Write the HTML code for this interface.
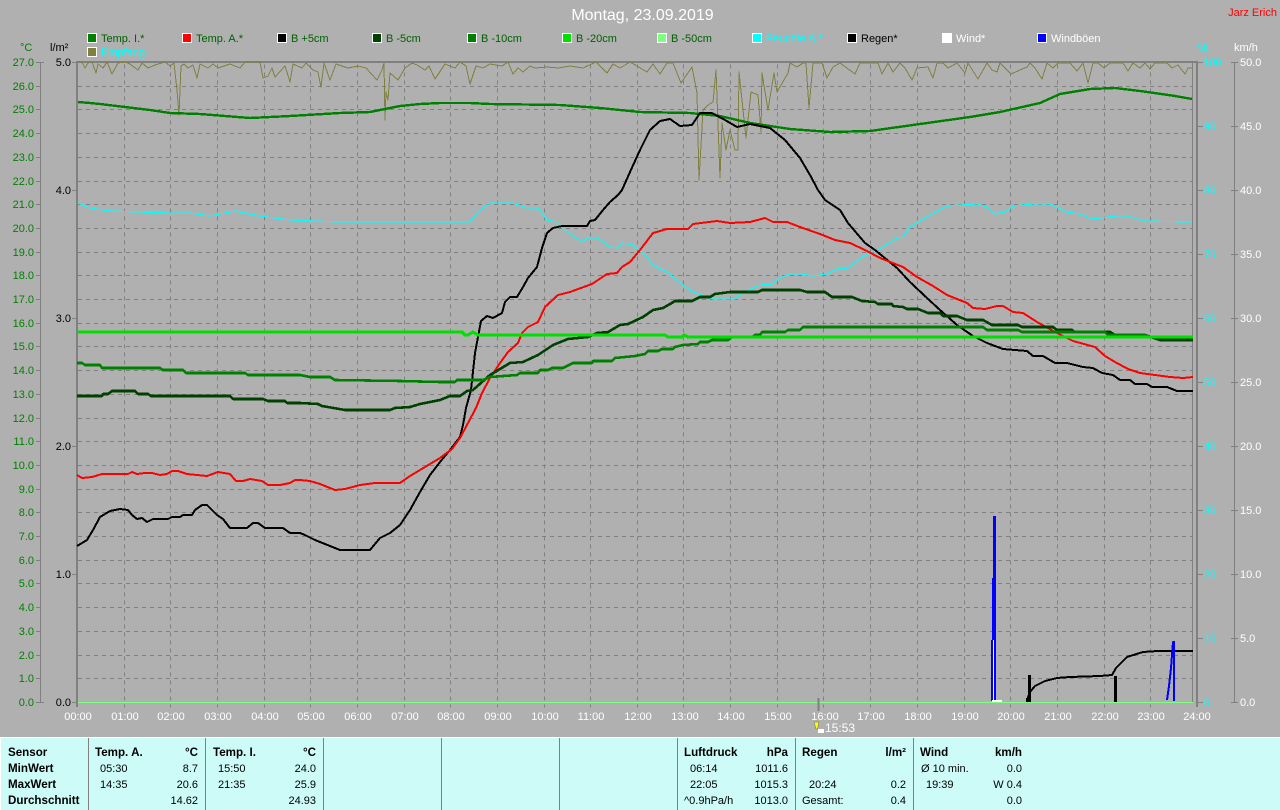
<!DOCTYPE html>
<html><head><meta charset="utf-8"><title>Montag, 23.09.2019</title>
<style>
html,body{margin:0;padding:0;background:#b0b0b0;width:1280px;height:810px;overflow:hidden}
svg{display:block;position:absolute;left:0;top:0}
text{font-family:"Liberation Sans",sans-serif;font-size:11px}
.c{fill:#008000;text-anchor:end}
.l{fill:#000;text-anchor:end}
.p{fill:#0ff;stroke:#0ff;stroke-width:.15px}
.k{fill:#fff}
.h{fill:#fff;text-anchor:middle}
.g{fill:#006000}
.b{font-weight:bold;font-size:11.600px;fill:#000}
.e{text-anchor:end}
.v{fill:#000}
polyline{fill:none;stroke-linejoin:round}
</style></head><body>
<svg width="1280" height="810" viewBox="0 0 1280 810" xmlns="http://www.w3.org/2000/svg">
<rect width="1280" height="810" fill="#b0b0b0"/>
<text x="642.500" y="20" text-anchor="middle" fill="#fff" style="font-size:16px">Montag, 23.09.2019</text>
<text x="1277" y="16" text-anchor="end" fill="#f00">Jarz Erich</text>

<g shape-rendering="crispEdges" stroke="#fff" stroke-width="1">
<rect x="87.500" y="33.500" width="9" height="9" fill="#008000"/>
<rect x="182.500" y="33.500" width="9" height="9" fill="#f00"/>
<rect x="277.500" y="33.500" width="9" height="9" fill="#000"/>
<rect x="372.500" y="33.500" width="9" height="9" fill="#004000"/>
<rect x="467.500" y="33.500" width="9" height="9" fill="#008000"/>
<rect x="562.500" y="33.500" width="9" height="9" fill="#00e000"/>
<rect x="657.500" y="33.500" width="9" height="9" fill="#80ff80"/>
<rect x="752.500" y="33.500" width="9" height="9" fill="#0ff"/>
<rect x="847.500" y="33.500" width="9" height="9" fill="#000"/>
<rect x="942.500" y="33.500" width="9" height="9" fill="#fff"/>
<rect x="1037.500" y="33.500" width="9" height="9" fill="#00f"/>
<rect x="87.500" y="47.500" width="9" height="9" fill="#808040"/>
</g>
<text x="101" y="42" class="g">Temp. I.*</text>
<text x="196" y="42" class="g">Temp. A.*</text>
<text x="291" y="42" class="g">B +5cm</text>
<text x="386" y="42" class="g">B -5cm</text>
<text x="481" y="42" class="g">B -10cm</text>
<text x="576" y="42" class="g">B -20cm</text>
<text x="671" y="42" class="g">B -50cm</text>
<text x="766" y="42" class="p">Feuchte A.*</text>
<text x="861" y="42" fill="#000">Regen*</text>
<text x="956" y="42" class="k">Wind*</text>
<text x="1051" y="42" class="k">Windböen</text>
<text x="101" y="56" class="p">Empfang</text>

<text x="20" y="51" fill="#008000">°C</text>
<text x="50" y="51" fill="#000">l/m²</text>
<text x="1198" y="51" class="p">%</text>
<text x="1234" y="51" class="k">km/h</text>

<!-- grid -->
<path transform="translate(0,.5)" shape-rendering="crispEdges" stroke="#808080" stroke-width="1" stroke-dasharray="4 4" fill="none" d="M78 86H1192M78 109H1192M78 133H1192M78 157H1192M78 181H1192M78 204H1192M78 228H1192M78 252H1192M78 275H1192M78 299H1192M78 323H1192M78 346H1192M78 370H1192M78 394H1192M78 418H1192M78 441H1192M78 465H1192M78 489H1192M78 512H1192M78 536H1192M78 560H1192M78 583H1192M78 607H1192M78 631H1192M78 655H1192M78 678H1192
M124.500 64V707M170.500 64V707M217.500 64V707M264.500 64V707M310.500 64V707M357.500 64V707M404.500 64V707M450.500 64V707M497.500 64V707M544.500 64V707M590.500 64V707M637.500 64V707M683.500 64V707M730.500 64V707M777.500 64V707M823.500 64V707M870.500 64V707M917.500 64V707M964.500 64V707M1010.500 64V707M1057.500 64V707M1104.500 64V707M1150.500 64V707"/>
<path shape-rendering="crispEdges" stroke="#808080" stroke-width="1" fill="none" d="M1192.500 62V702"/>
<path shape-rendering="crispEdges" stroke="#808080" stroke-width="2" fill="none" d="M76 62H1198M77 61V707M1197 61V707"/>
<!-- axis lines -->
<path transform="translate(0,.5)" shape-rendering="crispEdges" stroke="#808080" stroke-width="1" fill="none" d="M40.500 62V702M36 62H44M36 86H41M36 109H41M36 133H41M36 157H41M36 181H41M36 204H41M36 228H41M36 252H41M36 275H41M36 299H41M36 323H41M36 346H41M36 370H41M36 394H41M36 418H41M36 441H41M36 465H41M36 489H41M36 512H41M36 536H41M36 560H41M36 583H41M36 607H41M36 631H41M36 655H41M36 678H41M36 702H44
M72 62H77M72 190H77M72 318H77M72 446H77M72 574H77M72 702H77
M1198 62H1203M1198 126H1203M1198 190H1203M1198 254H1203M1198 318H1203M1198 382H1203M1198 446H1203M1198 510H1203M1198 574H1203M1198 638H1203M1198 702H1203
M1234.500 62V702M1231 62H1238M1231 126H1238M1231 190H1238M1231 254H1238M1231 318H1238M1231 382H1238M1231 446H1238M1231 510H1238M1231 574H1238M1231 638H1238M1231 702H1238"/>

<!-- left labels -->
<text class="c" x="34" y="66">27.0</text><text class="c" x="34" y="90">26.0</text><text class="c" x="34" y="113">25.0</text><text class="c" x="34" y="137">24.0</text><text class="c" x="34" y="161">23.0</text><text class="c" x="34" y="185">22.0</text><text class="c" x="34" y="208">21.0</text><text class="c" x="34" y="232">20.0</text><text class="c" x="34" y="256">19.0</text><text class="c" x="34" y="279">18.0</text><text class="c" x="34" y="303">17.0</text><text class="c" x="34" y="327">16.0</text><text class="c" x="34" y="350">15.0</text><text class="c" x="34" y="374">14.0</text><text class="c" x="34" y="398">13.0</text><text class="c" x="34" y="422">12.0</text><text class="c" x="34" y="445">11.0</text><text class="c" x="34" y="469">10.0</text><text class="c" x="34" y="493">9.0</text><text class="c" x="34" y="516">8.0</text><text class="c" x="34" y="540">7.0</text><text class="c" x="34" y="564">6.0</text><text class="c" x="34" y="587">5.0</text><text class="c" x="34" y="611">4.0</text><text class="c" x="34" y="635">3.0</text><text class="c" x="34" y="659">2.0</text><text class="c" x="34" y="682">1.0</text><text class="c" x="34" y="706">0.0</text>
<text class="l" x="71" y="66">5.0</text><text class="l" x="71" y="194">4.0</text><text class="l" x="71" y="322">3.0</text><text class="l" x="71" y="450">2.0</text><text class="l" x="71" y="578">1.0</text><text class="l" x="71" y="706">0.0</text>
<!-- right labels -->
<text class="p" x="1203" y="66">100</text><text class="p" x="1204" y="130">90</text><text class="p" x="1204" y="194">80</text><text class="p" x="1204" y="258">70</text><text class="p" x="1204" y="322">60</text><text class="p" x="1204" y="386">50</text><text class="p" x="1204" y="450">40</text><text class="p" x="1204" y="514">30</text><text class="p" x="1204" y="578">20</text><text class="p" x="1204" y="642">10</text><text class="p" x="1204" y="706">0</text>
<text class="k" x="1240" y="66">50.0</text><text class="k" x="1240" y="130">45.0</text><text class="k" x="1240" y="194">40.0</text><text class="k" x="1240" y="258">35.0</text><text class="k" x="1240" y="322">30.0</text><text class="k" x="1240" y="386">25.0</text><text class="k" x="1240" y="450">20.0</text><text class="k" x="1240" y="514">15.0</text><text class="k" x="1240" y="578">10.0</text><text class="k" x="1240" y="642">5.0</text><text class="k" x="1240" y="706">0.0</text>
<!-- hours -->
<text class="h" x="78" y="720">00:00</text><text class="h" x="125" y="720">01:00</text><text class="h" x="171" y="720">02:00</text><text class="h" x="218" y="720">03:00</text><text class="h" x="265" y="720">04:00</text><text class="h" x="311" y="720">05:00</text><text class="h" x="358" y="720">06:00</text><text class="h" x="405" y="720">07:00</text><text class="h" x="451" y="720">08:00</text><text class="h" x="498" y="720">09:00</text><text class="h" x="545" y="720">10:00</text><text class="h" x="591" y="720">11:00</text><text class="h" x="638" y="720">12:00</text><text class="h" x="685" y="720">13:00</text><text class="h" x="731" y="720">14:00</text><text class="h" x="778" y="720">15:00</text><text class="h" x="825" y="720">16:00</text><text class="h" x="871" y="720">17:00</text><text class="h" x="918" y="720">18:00</text><text class="h" x="965" y="720">19:00</text><text class="h" x="1011" y="720">20:00</text><text class="h" x="1058" y="720">21:00</text><text class="h" x="1105" y="720">22:00</text><text class="h" x="1151" y="720">23:00</text><text class="h" x="1197" y="720">24:00</text>

<g shape-rendering="crispEdges">
<!-- Empfang -->
<polyline stroke="#808040" stroke-width="1" points="78,62 82,62 85,68 88,63 92,62 96,73 98,64 103,68 107,62 112,74 118,63 125,62 130,64 138,70 142,63 148,68 155,65 165,62 170,66 174,63 177,90 179,115 181,66 184,64 188,68 193,65 197,78 200,64 208,68 213,64 218,68 224,66 230,64 240,68 245,62 260,62 263,78 268,76 272,68 275,77 285,66 290,82 293,64 302,68 306,63 313,70 318,72 321,87 324,63 330,80 336,64 342,66 348,68 358,66 366,68 377,80 382,70 384,63 385,120 386,92 388,100 390,73 398,80 405,68 412,63 417,65 425,70 429,66 435,79 445,64 455,68 460,62 466,66 470,84 476,66 483,68 490,64 502,66 508,62 513,74 518,68 523,72 530,66 535,68 547,67 558,68 570,66 583,68 596,62 607,73 613,64 620,68 630,62 637,66 647,72 653,64 660,74 667,63 673,63 681,83 692,67 697,93 699,180 703,110 708,105 713,102 716,70 720,178 722,123 726,150 730,130 735,150 738,150 739,72 746,138 751,92 758,95 761,132 762,73 768,110 774,73 777,92 788,73 790,63 797,67 803,63 806,63 809,108 813,63 822,63 827,78 833,67 840,63 855,74 860,63 878,63 882,74 888,63 893,72 900,63 905,68 912,80 917,68 928,67 933,78 937,63 943,63 948,68 957,63 965,73 968,63 978,79 987,63 992,70 997,72 1000,63 1011,74 1020,70 1027,67 1030,63 1035,68 1042,79 1047,63 1053,68 1058,63 1070,63 1077,71 1083,63 1088,83 1093,63 1098,63 1104,68 1110,63 1123,63 1128,71 1133,63 1140,68 1145,63 1150,69 1155,63 1167,63 1172,68 1178,65 1185,74 1188,68 1192,68"/>
<!-- Feuchte -->
<polyline stroke="#00ffff" stroke-width="1.200" points="78,203 90,208 110,211 170,213 190,213 210,216 235,211 260,216 290,220 340,222 440,222 470,222 478,212 490,203 513,203 527,208 538,208 547,220 557,222 567,232 583,242 587,238 598,238 610,247 618,248 622,243 633,245 647,257 653,265 667,272 683,285 693,292 713,299 735,299 742,293 760,285 773,284 780,278 790,274 800,274 813,276 827,274 837,269 848,268 862,257 883,247 897,238 903,237 910,227 930,215 947,206 977,204 987,207 995,214 1005,212 1013,206 1033,204 1050,204 1067,212 1080,214 1092,219 1117,216 1128,216 1143,221 1192,222"/>
<!-- Temp I -->
<polyline stroke="#008000" stroke-width="2.400" points="78,102 90,103 100,104 125,107 150,110 170,113 200,114 250,118 290,116 340,113 370,112 400,106 420,104 440,103 470,103 490,104 560,105 600,108 640,112 690,113 720,116 750,123 790,129 830,132 870,131 920,124 970,117 1000,112 1040,103 1060,94 1090,89 1115,88 1140,91 1175,96 1192,99"/>
<!-- Regen -->
<polyline stroke="#000" stroke-width="2" points="1027,700 1030,692 1035,686 1045,681 1057,678 1070,677 1100,676 1112,675 1116,668 1127,657 1143,652 1158,651 1193,651"/>
<rect x="1028" y="675" width="3" height="27" fill="#000"/>
<rect x="1026" y="698" width="3" height="4" fill="#000"/>
<rect x="1114" y="676" width="3" height="26" fill="#000"/>
<!-- Wind -->
<rect x="991" y="640" width="5" height="61" fill="#00f"/>
<rect x="992" y="578" width="4" height="62" fill="#00f"/>
<rect x="993" y="516" width="3" height="62" fill="#00f"/>
<polyline stroke="#00f" stroke-width="2" points="1167,700 1169,686 1171,668 1172,655 1173,642 1174,642 1174,701"/>
<rect x="993" y="640" width="1" height="60" fill="#fff"/>
<rect x="992" y="700" width="10" height="2" fill="#fff"/>
<!-- Bodensensor +5 -->
<polyline stroke="#000" stroke-width="2" points="77,546 87,540 93,530 100,517 110,511 120,509 128,510 132,515 137,519 142,518 147,522 153,519 168,519 172,517 180,517 183,515 192,515 195,510 202,505 207,505 217,515 223,519 230,528 247,528 253,523 258,523 265,528 283,528 290,533 300,533 305,535 315,540 325,544 340,550 370,550 380,538 390,533 400,525 410,510 420,492 430,475 440,462 450,450 460,437 463,425 466,408 471,390 475,353 481,321 487,316 493,318 502,313 505,302 510,297 517,297 523,287 528,278 537,267 542,248 547,233 553,228 562,226 587,226 590,221 595,220 603,210 610,202 618,195 622,190 630,172 640,150 650,130 660,121 670,119 680,126 692,125 700,113 712,113 725,120 737,127 750,124 770,128 785,140 800,158 810,175 818,190 825,200 840,210 848,223 865,243 875,250 897,268 910,282 927,298 940,310 957,325 973,336 987,343 1003,349 1027,351 1033,356 1043,356 1055,363 1067,363 1083,367 1093,368 1102,373 1113,375 1120,380 1130,380 1135,384 1147,384 1152,387 1167,387 1177,391 1193,391"/>
<!-- Temp A -->
<polyline stroke="#f00" stroke-width="2" points="77,475 82,478 92,477 102,474 128,474 132,472 137,474 145,473 152,473 160,475 167,474 172,471 178,471 187,474 207,476 218,472 230,474 236,481 243,481 250,479 262,481 268,485 280,485 290,483 295,480 300,480 310,481 320,484 335,490 345,489 360,485 375,483 400,483 410,476 420,470 440,458 452,449 460,438 468,423 476,408 482,393 490,378 500,363 508,352 518,343 522,333 528,327 538,322 545,307 558,295 570,292 592,284 607,274 617,273 622,267 630,262 640,250 653,233 667,229 688,229 693,224 717,221 730,223 750,222 765,218 773,222 787,222 800,227 820,234 835,240 850,243 867,251 880,258 903,267 917,277 933,286 947,295 967,303 973,308 985,309 997,306 1003,306 1013,312 1023,313 1037,322 1057,333 1073,341 1095,347 1105,356 1115,362 1128,369 1140,373 1170,377 1183,378 1193,377"/>
<!-- B -5 -->
<polyline stroke="#004000" stroke-width="2.600" points="77,396 102,396 103,394 108,394 112,391 135,391 138,394 148,394 151,396 230,396 233,399 263,399 268,401 285,401 287,403 300,403 318,404 322,406 345,410 390,410 395,408 410,407 420,404 430,402 440,400 450,396 460,396 467,391 473,390 490,375 510,363 523,362 538,355 553,345 568,339 588,337 597,333 608,332 620,325 628,324 643,317 653,310 663,308 670,304 675,301 692,301 700,297 710,297 715,294 730,292 758,292 762,290 800,290 807,292 825,292 832,297 852,297 862,301 875,302 878,304 892,304 893,306 903,307 907,309 918,309 928,313 940,313 943,316 957,316 967,320 983,320 992,325 1018,325 1022,327 1053,327 1057,330 1072,330 1075,332 1110,332 1115,335 1145,335 1160,340 1193,340"/>
<!-- B -10 -->
<polyline stroke="#008000" stroke-width="2.600" points="77,363 82,363 85,365 100,365 102,368 160,368 163,370 183,370 186,373 245,373 248,375 300,375 310,377 330,377 335,380 400,381 440,382 455,382 457,380 483,380 490,377 517,375 520,373 538,373 540,370 548,370 552,368 563,368 567,366 573,363 592,363 593,361 612,361 615,358 635,356 645,354 648,351 658,351 662,349 673,349 675,347 683,345 698,344 700,342 708,342 712,340 728,340 732,337 752,337 755,335 760,335 762,332 785,332 788,330 800,330 803,327 983,327 987,330 1018,330 1022,332 1105,332 1108,335 1145,335 1150,337 1193,337"/>
<!-- B -20 -->
<polyline stroke="#00e000" stroke-width="3" points="78,332 462,332 465,335 468,335 473,332 478,335 665,335 668,337 682,337 684,335 688,337 1193,337"/>
<!-- B -50 -->
<path stroke="#80ff80" stroke-width="1" fill="none" d="M78 702.500H1193"/>
<!-- now marker -->
<path stroke="#808080" stroke-width="2" fill="none" d="M818.500 698V711"/>
</g>
<path d="M814 722H819L817.500 729H816Z" fill="#ffff00" stroke="#606080" stroke-width="0.500"/>
<rect x="818" y="729" width="6" height="4" fill="#fff"/>
<text x="825" y="732" fill="#fff" style="font-size:12px">15:53</text>

<!-- bottom panel -->
<rect x="0" y="737" width="1280" height="73" fill="#fff"/>
<rect x="1" y="738" width="1279" height="72" fill="#ccfbf8"/>
<path shape-rendering="crispEdges" stroke="#808080" stroke-width="1" fill="none" d="M88.500 738V810M205.500 738V810M323.500 738V810M441.500 738V810M559.500 738V810M677.500 738V810M795.500 738V810M913.500 738V810"/>

<g>
<text class="b" x="8" y="756">Sensor</text>
<text class="b" x="8" y="772">MinWert</text>
<text class="b" x="8" y="788">MaxWert</text>
<text class="b" x="8" y="804">Durchschnitt</text>

<text class="b" x="95" y="756">Temp. A.</text><text class="b e" x="198" y="756">°C</text>
<text class="v" x="100" y="772">05:30</text><text class="v e" x="198" y="772">8.7</text>
<text class="v" x="100" y="788">14:35</text><text class="v e" x="198" y="788">20.6</text>
<text class="v e" x="198" y="804">14.62</text>

<text class="b" x="213" y="756">Temp. I.</text><text class="b e" x="316" y="756">°C</text>
<text class="v" x="218" y="772">15:50</text><text class="v e" x="316" y="772">24.0</text>
<text class="v" x="218" y="788">21:35</text><text class="v e" x="316" y="788">25.9</text>
<text class="v e" x="316" y="804">24.93</text>

<text class="b" x="684" y="756">Luftdruck</text><text class="b e" x="788" y="756">hPa</text>
<text class="v" x="690" y="772">06:14</text><text class="v e" x="788" y="772">1011.6</text>
<text class="v" x="690" y="788">22:05</text><text class="v e" x="788" y="788">1015.3</text>
<text class="v" x="684" y="804">^0.9hPa/h</text><text class="v e" x="788" y="804">1013.0</text>

<text class="b" x="802" y="756">Regen</text><text class="b e" x="906" y="756">l/m²</text>
<text class="v" x="809" y="788">20:24</text><text class="v e" x="906" y="788">0.2</text>
<text class="v" x="802" y="804">Gesamt:</text><text class="v e" x="906" y="804">0.4</text>

<text class="b" x="920" y="756">Wind</text><text class="b e" x="1022" y="756">km/h</text>
<text class="v" x="921" y="772">Ø 10 min.</text><text class="v e" x="1022" y="772">0.0</text>
<text class="v" x="926" y="788">19:39</text><text class="v e" x="1022" y="788">W 0.4</text>
<text class="v e" x="1022" y="804">0.0</text>
</g>
</svg>
</body></html>
